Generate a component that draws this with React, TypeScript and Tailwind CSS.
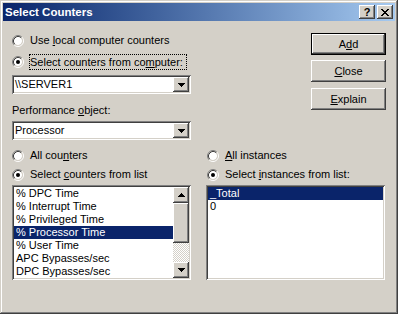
import React from "react";

const raised =
  "shadow-[inset_-1px_-1px_0_#404040,inset_1px_1px_0_#fff,inset_-2px_-2px_0_#808080,inset_2px_2px_0_#d4d0c8]";
const sunken =
  "shadow-[inset_1px_1px_0_#808080,inset_-1px_-1px_0_#fff,inset_2px_2px_0_#404040,inset_-2px_-2px_0_#d4d0c8]";

function Radio({ checked }: { checked?: boolean }) {
  return (
    <svg width="12" height="12" viewBox="0 0 12 12" className="shrink-0">
      <circle cx="6" cy="6" r="4" fill="#fff" />
      <path d="M2.11 9.89A5.5 5.5 0 0 1 9.89 2.11" fill="none" stroke="#808080" />
      <path d="M9.89 2.11A5.5 5.5 0 0 1 2.11 9.89" fill="none" stroke="#fff" />
      <path d="M2.82 9.18A4.5 4.5 0 0 1 9.18 2.82" fill="none" stroke="#404040" />
      <path d="M9.18 2.82A4.5 4.5 0 0 1 2.82 9.18" fill="none" stroke="#d4d0c8" />
      {checked && <circle cx="6" cy="6" r="2" fill="#000" />}
    </svg>
  );
}

function Arrow({ up }: { up?: boolean }) {
  return (
    <svg width="7" height="4" viewBox="0 0 7 4" shapeRendering="crispEdges">
      {up ? (
        <path d="M3 0h1v1H3zM2 1h3v1H2zM1 2h5v1H1zM0 3h7v1H0z" fill="#000" />
      ) : (
        <path d="M0 0h7v1H0zM1 1h5v1H1zM2 2h3v1H2zM3 3h1v1H3z" fill="#000" />
      )}
    </svg>
  );
}

function XIcon() {
  return (
    <svg width="8" height="7" viewBox="0 0 8 7" shapeRendering="crispEdges">
      <path
        d="M0 0h2v1H0zM6 0h2v1H6zM1 1h2v1H1zM5 1h2v1H5zM2 2h4v1H2zM3 3h2v1H3zM2 4h4v1H2zM1 5h2v1H1zM5 5h2v1H5zM0 6h2v1H0zM6 6h2v1H6z"
        fill="#000"
      />
    </svg>
  );
}

function RadioRow({
  checked,
  children,
  className,
}: {
  checked?: boolean;
  children: React.ReactNode;
  className?: string;
}) {
  return (
    <div className={`h-[13px] flex items-center ${className ?? ""}`}>
      <Radio checked={checked} />
      <span className="ml-[6px] leading-[13px] whitespace-nowrap">{children}</span>
    </div>
  );
}

function Combo({ text, className }: { text: string; className?: string }) {
  return (
    <div className={`h-[19px] w-[179px] bg-white flex items-stretch p-[2px] ${sunken} ${className ?? ""}`}>
      <span className="flex-1 pl-[1px] leading-[15px] whitespace-nowrap">{text}</span>
      <div className={`w-[16px] bg-[#d4d0c8] flex items-center justify-center ${raised}`}>
        <Arrow />
      </div>
    </div>
  );
}

function Scrollbar() {
  return (
    <div className="w-[16px] flex flex-col shrink-0">
      <div className={`h-[16px] bg-[#d4d0c8] flex items-center justify-center ${raised}`}>
        <Arrow up />
      </div>
      <div className={`h-[40px] bg-[#d4d0c8] ${raised}`} />
      <div className="flex-1 bg-[conic-gradient(#fff_25%,#d4d0c8_0_50%,#fff_0_75%,#d4d0c8_0)] bg-size-[2px_2px]" />
      <div className={`h-[16px] bg-[#d4d0c8] flex items-center justify-center ${raised}`}>
        <Arrow />
      </div>
    </div>
  );
}

function ListBox({
  items,
  selected,
  scroll,
  className,
}: {
  items: string[];
  selected: number;
  scroll?: boolean;
  className?: string;
}) {
  return (
    <div className={`h-[95px] w-[179px] bg-white p-[2px] flex ${sunken} ${className ?? ""}`}>
      <div className="flex-1 flex flex-col overflow-hidden">
        {items.map((t, i) => (
          <div
            key={i}
            className={`h-[13px] leading-[13px] pl-[2px] whitespace-nowrap ${
              i === selected ? "bg-[#0a246a] text-white" : ""
            }`}
          >
            {t}
          </div>
        ))}
      </div>
      {scroll && <Scrollbar />}
    </div>
  );
}

function Button({
  children,
  isDefault,
  className,
}: {
  children: React.ReactNode;
  isDefault?: boolean;
  className?: string;
}) {
  return (
    <div
      className={`w-[75px] h-[22px] ${isDefault ? "border border-black" : ""} ${className ?? ""}`}
    >
      <div className={`w-full h-full bg-[#d4d0c8] flex items-center justify-center leading-[13px] ${raised}`}>
        {children}
      </div>
    </div>
  );
}

export default function App() {
  return (
    <div className="w-[398px] h-[314px] bg-[#d4d0c8] p-[3px] flex flex-col text-[11px] text-black font-['Liberation_Sans',Arial,sans-serif] shadow-[inset_-1px_-1px_0_#404040,inset_1px_1px_0_#d4d0c8,inset_-2px_-2px_0_#808080,inset_2px_2px_0_#fff]">
      <div className="h-[18px] flex items-center pl-[2px] pr-[2px] bg-linear-to-r from-[#0a246a] to-[#a6caf0]">
        <span className="flex-1 text-white font-bold text-[11.5px] leading-[14px]">Select Counters</span>
        <div className={`w-[16px] h-[14px] bg-[#d4d0c8] flex items-center justify-center font-bold text-[11px] leading-[11px] ${raised}`}>
          ?
        </div>
        <div className={`ml-[2px] w-[16px] h-[14px] bg-[#d4d0c8] flex items-center justify-center ${raised}`}>
          <XIcon />
        </div>
      </div>

      <div className="flex flex-1 px-[9px]">
        <div className="w-[179px] flex flex-col shrink-0">
          <RadioRow className="mt-[13px]">
            Use <u>l</u>ocal computer counters
          </RadioRow>
          <div className="mt-[7px] h-[16px] flex items-center">
            <Radio checked />
            <span className="ml-[5px] h-[16px] flex items-center border border-dotted border-black pr-[3px] leading-[13px] whitespace-nowrap">
              Select counters from co<u>m</u>puter:
            </span>
          </div>
          <Combo className="mt-[5px]" text={"\\\\SERVER1"} />
          <div className="mt-[10px] h-[13px] leading-[13px]">
            Performance <u>o</u>bject:
          </div>
          <Combo className="mt-[4px]" text="Processor" />
          <RadioRow className="mt-[9px]">
            All cou<u>n</u>ters
          </RadioRow>
          <RadioRow className="mt-[6px]" checked>
            Select <u>c</u>ounters from list
          </RadioRow>
          <ListBox
            className="mt-[4px]"
            scroll
            selected={3}
            items={[
              "% DPC Time",
              "% Interrupt Time",
              "% Privileged Time",
              "% Processor Time",
              "% User Time",
              "APC Bypasses/sec",
              "DPC Bypasses/sec",
            ]}
          />
        </div>

        <div className="ml-[15px] w-[179px] flex flex-col shrink-0">
          <div className="flex flex-col items-end mr-[-1px] mt-[12px]">
            <Button isDefault>
              A<u>d</u>d
            </Button>
            <Button className="mt-[5px]">
              <u>C</u>lose
            </Button>
            <Button className="mt-[6px]">
              <u>E</u>xplain
            </Button>
          </div>
          <RadioRow className="mt-[39px] ml-[1px]">
            <u>A</u>ll instances
          </RadioRow>
          <RadioRow className="mt-[6px] ml-[1px]" checked>
            Select <u>i</u>nstances from list:
          </RadioRow>
          <ListBox className="mt-[4px]" selected={0} items={["_Total", "0"]} />
        </div>
      </div>
    </div>
  );
}
